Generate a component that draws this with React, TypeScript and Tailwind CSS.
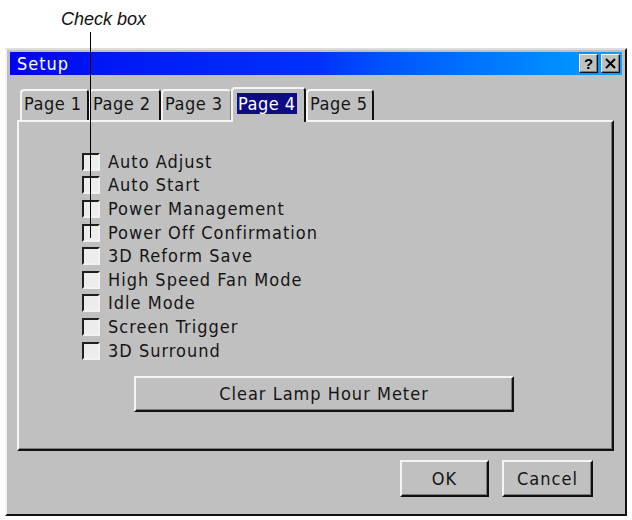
import React from "react";

const ui = "font-['DejaVu_Sans_Condensed','DejaVu_Sans',sans-serif] font-stretch-condensed";

const options = [
  "Auto Adjust",
  "Auto Start",
  "Power Management",
  "Power Off Confirmation",
  "3D Reform Save",
  "High Speed Fan Mode",
  "Idle Mode",
  "Screen Trigger",
  "3D Surround",
];

const tabs = [
  { label: "Page 1", w: "w-[69px]" },
  { label: "Page 2", w: "w-[72px]" },
  { label: "Page 3", w: "w-[70px]" },
  { label: "Page 4", w: "w-[75px]", active: true },
  { label: "Page 5", w: "w-[68px]" },
];

function CheckBox() {
  return (
    <div className="w-[18px] h-[18px] flex-shrink-0 border-2 border-t-[#1e1e1e] border-l-[#1e1e1e] border-r-[#f2f2f2] border-b-[#f2f2f2] bg-[#ececec]" />
  );
}

function Button({ label, className }: { label: string; className: string }) {
  return (
    <div
      className={`flex items-center justify-center bg-[#c0c0c0] border-2 border-t-[#f4f4f4] border-l-[#f4f4f4] border-r-[#111] border-b-[#111] shadow-[inset_-1px_-1px_0_#7a7a7a] text-[18px] leading-[20px] tracking-[1px] text-[#151515] ${className}`}
    >
      {label}
    </div>
  );
}

function TitleButton({ children }: { children: React.ReactNode }) {
  return (
    <div className="w-[19px] h-[19px] flex items-center justify-center bg-[#c0c0c0] border border-t-[#f4f4f4] border-l-[#f4f4f4] border-r-[#111] border-b-[#111] shadow-[inset_-1px_-1px_0_#7a7a7a]">
      {children}
    </div>
  );
}

export default function App() {
  return (
    <div className={`relative w-[632px] h-[520px] bg-white overflow-hidden ${ui}`}>
      <div className="h-[48px] pl-[61px] pt-[8px]">
        <span className="italic text-[18px] leading-[18px] font-['Liberation_Sans',Arial,sans-serif] font-stretch-normal text-[#111]">
          Check box
        </span>
      </div>

      <div className="ml-[5px] w-[622px] h-[468px] flex flex-col bg-[#c0c0c0] border-2 border-t-[#dedede] border-l-[#f4f4f4] border-r-[#111] border-b-[#111] pt-[2px] px-[3px]">
        {/* title bar */}
        <div className="h-[23px] flex items-center justify-between pl-[7px] pr-[2px] bg-linear-to-r from-[#0000f2] via-[#0030fa] via-50% to-[#12a0ff]">
          <span className="text-white text-[18px] leading-[20px] tracking-[1px]">Setup</span>
          <div className="flex gap-[3px]">
            <TitleButton>
              <span className="text-[15px] leading-[15px] font-bold font-['Liberation_Sans',Arial,sans-serif] text-black">?</span>
            </TitleButton>
            <TitleButton>
              <svg width="11" height="11" viewBox="0 0 11 11">
                <path d="M1 1 L10 10 M10 1 L1 10" stroke="#000" strokeWidth="2" />
              </svg>
            </TitleButton>
          </div>
        </div>

        {/* tabs + page */}
        <div className="ml-[7px] mr-[8px] mt-[12px] flex flex-col">
          <div className="h-[33px] flex items-end pl-[3px]">
            {tabs.map((t) => (
              <div
                key={t.label}
                className={`${t.w} flex-shrink-0 whitespace-nowrap overflow-hidden pl-[1px] rounded-t-[4px] border-t-2 border-l-2 border-t-[#f4f4f4] border-l-[#f4f4f4] bg-[#c0c0c0] ${
                  t.active
                    ? "relative z-10 h-[35px] -mb-[2px] pt-[4px] pl-[4px] border-r-2 border-r-[#111]"
                    : t.label === "Page 3"
                    ? "h-[31px] pt-[2px] border-r border-r-[#8a8a8a]"
                    : "h-[31px] pt-[2px] border-r-2 border-r-[#111]"
                }`}
              >
                <span
                  className={`inline-block text-[18px] leading-[21px] tracking-[0.5px] px-[1px] ${
                    t.active ? "bg-[#0c0c84] text-white" : "text-[#151515]"
                  }`}
                >
                  {t.label}
                </span>
              </div>
            ))}
          </div>

          <div className="h-[331px] flex flex-col border-2 border-t-[#f4f4f4] border-l-[#f4f4f4] border-r-[#111] border-b-[#111] shadow-[inset_-1px_-1px_0_#7a7a7a] pt-[28px]">
            <div className="ml-[63px] flex flex-col">
              {options.map((o) => (
                <div key={o} className="h-[23.6px] flex items-center">
                  <CheckBox />
                  <span className="ml-[8px] text-[18px] leading-[20px] tracking-[1px] text-[#151515] whitespace-nowrap">{o}</span>
                </div>
              ))}
            </div>
            <Button label="Clear Lamp Hour Meter" className="ml-[115px] mt-[14px] w-[380px] h-[36px]" />
          </div>
        </div>

        {/* dialog buttons */}
        <div className="mt-[9px] mr-[29px] flex justify-end gap-[13px]">
          <Button label="OK" className="w-[89px] h-[37px]" />
          <Button label="Cancel" className="w-[91px] h-[37px]" />
        </div>
      </div>

      {/* leader line for the annotation */}
      <div className="absolute left-[90px] top-[32px] w-px h-[206px] bg-black z-20" />
    </div>
  );
}
